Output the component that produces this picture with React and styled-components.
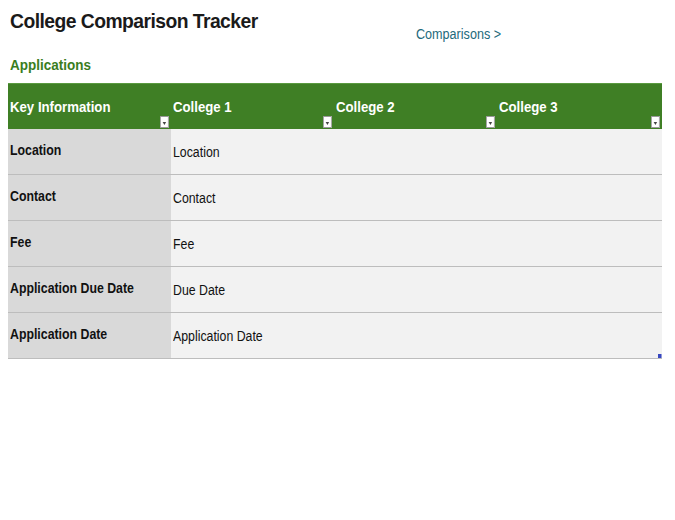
import React from "react";
import styled, { createGlobalStyle } from "styled-components";

const Global = createGlobalStyle`
  body { margin: 0; background: #fff; font-family: "Liberation Sans", Arial, sans-serif; }
`;
const Page = styled.div`padding: 0 13px 0 8px; width: 654px;`;
const Top = styled.div`display: flex; align-items: flex-start; height: 52px;`;
const Title = styled.h1`
  margin: 9px 0 0 2px; font-size: 21px; font-weight: bold; color: #1a1a1a;
  letter-spacing: -0.6px; transform: scaleX(0.92); transform-origin: left;
  width: 400px; white-space: nowrap;
`;
const Link = styled.a`
  margin: 26px 0 0 6px; font-size: 14px; color: #1e6a7c; text-decoration: none;
  transform: scaleX(0.9); transform-origin: left; white-space: nowrap;
`;
const Section = styled.div`
  font-size: 15px; font-weight: bold; color: #3a7d1e; margin: 4px 0 0 2px; height: 27px;
  transform: scaleX(0.9); transform-origin: left;
`;
const Grid = styled.div`
  display: grid; grid-template-columns: 163px 163px 163px 165px;
`;
const Head = styled.div`
  position: relative; background: #3f7f25; height: 46px; color: #fff;
  font-size: 15px; font-weight: bold; padding: 14px 0 0 2px; box-sizing: border-box;
  border-top: 1px solid #5a9a40; white-space: nowrap;
  & > span { display: inline-block; transform: scaleX(0.88); transform-origin: left; }
`;
const Drop = styled.span`
  position: absolute; right: 1px; bottom: 1px; width: 10px; height: 12px;
  background: #fff; border: 1px solid #999; box-sizing: border-box;
  &::after { content: ""; position: absolute; left: 2px; top: 5px;
    border-left: 2.5px solid transparent; border-right: 2.5px solid transparent; border-top: 3px solid #444; }
`;
const Cell = styled.div`
  position: relative; height: 46px; box-sizing: border-box; border-bottom: 1px solid #bdbdbd;
  background: ${p => (p.$key ? "#d9d9d9" : "#f2f2f2")};
  font-size: 14px; font-weight: ${p => (p.$key ? "bold" : "normal")}; color: #111;
  display: flex; align-items: center; padding: 0 0 ${p => (p.$key ? "4px" : "0")} 2px; white-space: nowrap;
  & > span { display: inline-block; transform: scaleX(0.88); transform-origin: left; }
`;
const Corner = styled.span`
  position: absolute; right: 0; bottom: 0; width: 4px; height: 4px; background: #3848c0;
`;

const rows = [
  ["Location", "Location"],
  ["Contact", "Contact"],
  ["Fee", "Fee"],
  ["Application Due Date", "Due Date"],
  ["Application Date", "Application Date"],
];

export default function App() {
  return (
    <Page>
      <Global />
      <Top>
        <Title>College Comparison Tracker</Title>
        <Link href="#">Comparisons &gt;</Link>
      </Top>
      <Section>Applications</Section>
      <Grid>
        {["Key Information", "College 1", "College 2", "College 3"].map(h => (
          <Head key={h}><span>{h}</span><Drop /></Head>
        ))}
        {rows.map(([k, v], i) => (
          <React.Fragment key={k}>
            <Cell $key><span>{k}</span></Cell>
            <Cell><span>{v}</span></Cell>
            <Cell />
            <Cell>{i === rows.length - 1 && <Corner />}</Cell>
          </React.Fragment>
        ))}
      </Grid>
    </Page>
  );
}
